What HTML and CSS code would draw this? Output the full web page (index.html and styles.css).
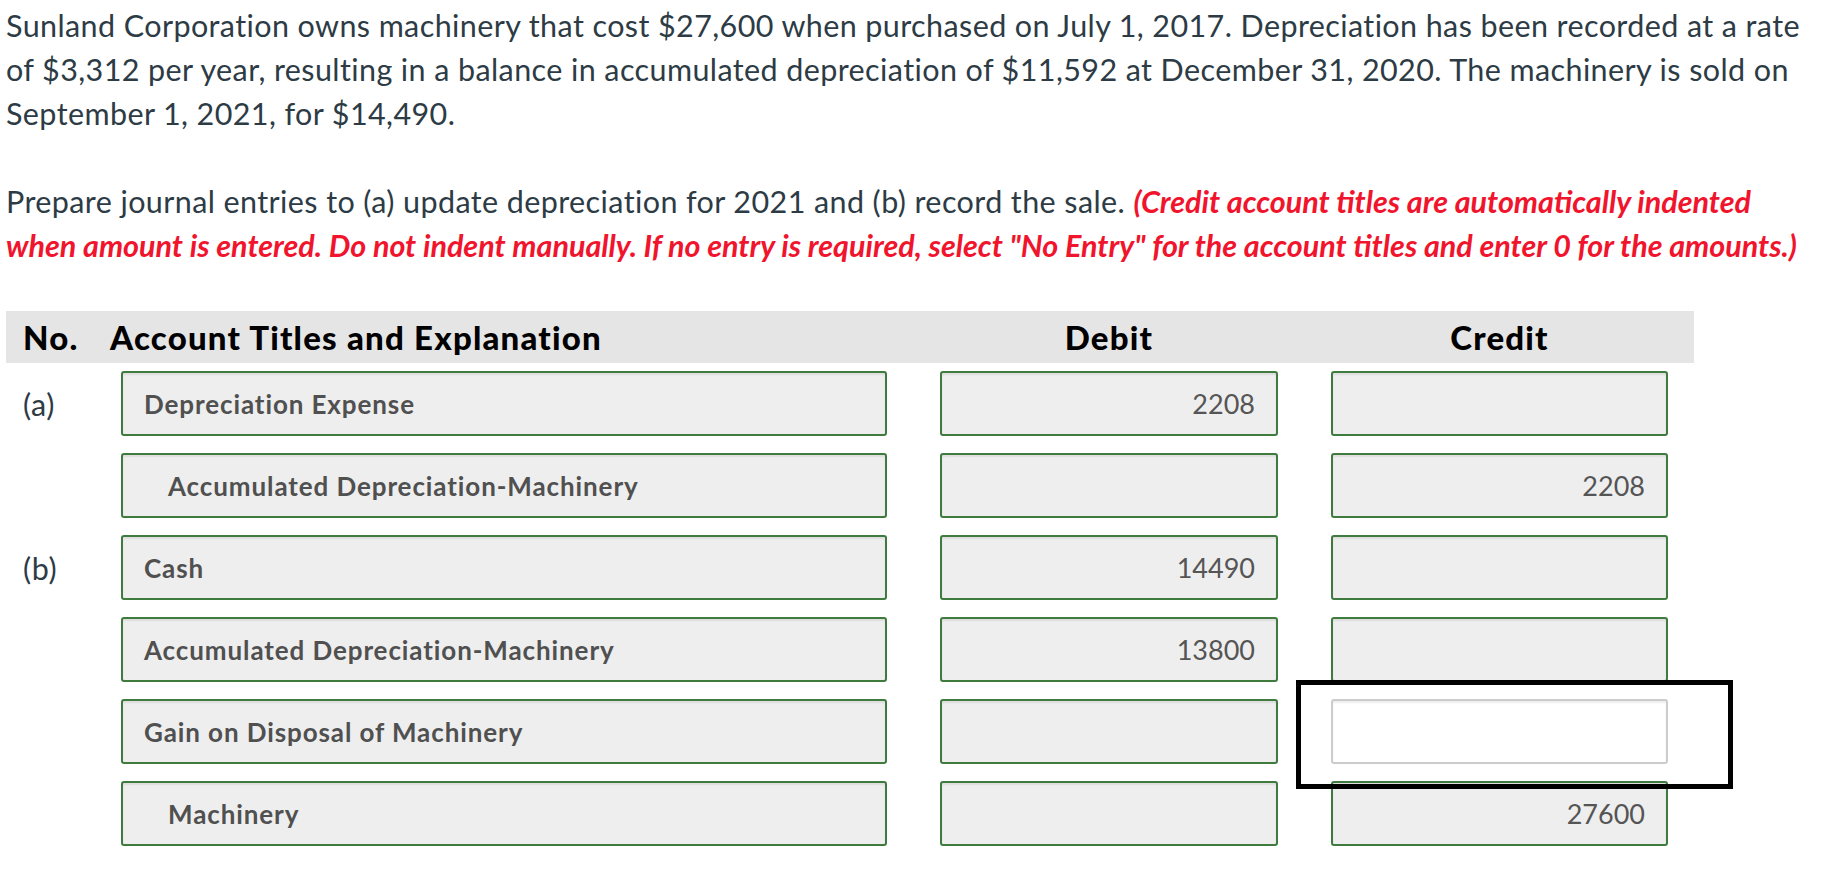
FILE: index.html
```html
<!DOCTYPE html>
<html lang="en">
<head>
    <meta charset="UTF-8">
    <meta name="viewport" content="width=device-width, initial-scale=1.0">
    <title>Journal Entries - Sunland Corporation</title>
    <link rel="stylesheet" href="styles.css">
</head>
<body>
    <div class="question">
        <p>Sunland Corporation owns machinery that cost $27,600 when purchased on July 1, 2017. Depreciation has been recorded at a rate of $3,312 per year, resulting in a balance in accumulated depreciation of $11,592 at December 31, 2020. The machinery is sold on September 1, 2021, for $14,490.</p>
        <p>Prepare journal entries to (a) update depreciation for 2021 and (b) record the sale. <span class="note">(Credit account titles are automatically indented when amount is entered. Do not indent manually. If no entry is required, select "No Entry" for the account titles and enter 0 for the amounts.)</span></p>

        <div class="journal">
            <div class="journal-head">
                <div class="col-no">No.</div>
                <div class="col-title">Account Titles and Explanation</div>
                <div class="col-amt">Debit</div>
                <div class="col-amt">Credit</div>
            </div>

            <div class="journal-row">
                <div class="col-no">(a)</div>
                <div class="field">Depreciation Expense</div>
                <div class="field amount">2208</div>
                <div class="field amount"></div>
            </div>
            <div class="journal-row">
                <div class="col-no"></div>
                <div class="field indent">Accumulated Depreciation-Machinery</div>
                <div class="field amount"></div>
                <div class="field amount">2208</div>
            </div>

            <div class="journal-row">
                <div class="col-no">(b)</div>
                <div class="field">Cash</div>
                <div class="field amount">14490</div>
                <div class="field amount"></div>
            </div>
            <div class="journal-row">
                <div class="col-no"></div>
                <div class="field">Accumulated Depreciation-Machinery</div>
                <div class="field amount">13800</div>
                <div class="field amount"></div>
            </div>
            <div class="journal-row">
                <div class="col-no"></div>
                <div class="field">Gain on Disposal of Machinery</div>
                <div class="field amount"></div>
                <div class="cell-marked">
                    <div class="field amount empty"></div>
                    <div class="marker"></div>
                </div>
            </div>
            <div class="journal-row">
                <div class="col-no"></div>
                <div class="field indent">Machinery</div>
                <div class="field amount"></div>
                <div class="field amount">27600</div>
            </div>
        </div>
    </div>
</body>
</html>
```

FILE: styles.css
```css
body {
    font-family: Lato, 'Open Sans', sans-serif;
    background: #fff;
    color: #2d3b45;
    margin: 0;
    padding: 0;
}
.question {
    padding: 3px 6px 0 6px;
}
.question p {
    font-size: 30.5px;
    letter-spacing: 0.4px;
    line-height: 44px;
    margin: 0 0 44px 0;
    max-width: 1820px;
}
.note {
    color: #f0142c;
    font-weight: 700;
    font-style: italic;
    letter-spacing: 0;
}
.journal {
    position: relative;
}
.journal-head,
.journal-row {
    display: grid;
    grid-template-columns: 62px 766px 338px 337px;
    column-gap: 53px;
    align-items: center;
}
.journal-head {
    width: 1688px;
    height: 52px;
    background: #e5e5e5;
    font-size: 33px;
    letter-spacing: 1.2px;
    font-weight: 900;
    color: #000;
    margin-bottom: 8px;
}
.journal-head .col-title {
    margin-left: -11px;
    white-space: nowrap;
}
.journal-head .col-amt {
    text-align: center;
}
.col-no {
    padding-left: 17px;
    font-size: 30.5px;
    letter-spacing: 0.55px;
}
.journal-head .col-no {
    font-size: 33px;
    letter-spacing: 1.2px;
}
.journal-row {
    margin-bottom: 17px;
}
.field {
    box-sizing: border-box;
    height: 65px;
    border: 2px solid #3f7b3f;
    border-radius: 3px;
    background: #eee;
    box-shadow: inset 0 2px 2px rgba(0, 0, 0, 0.07);
    padding: 0 21px;
    display: flex;
    align-items: center;
    font-size: 26px;
    letter-spacing: 0.9px;
    font-weight: 700;
    color: #505050;
    white-space: nowrap;
}
.field.indent {
    padding-left: 45px;
}
.field.amount {
    justify-content: flex-end;
    font-weight: 400;
    font-size: 27px;
    letter-spacing: 0;
    color: #555;
}
.field.empty {
    background: #fff;
    border-color: #ccc;
}
.cell-marked {
    position: relative;
}
.marker {
    position: absolute;
    left: -35px;
    right: -65px;
    top: -19px;
    bottom: -25px;
    border: 5px solid #000;
    pointer-events: none;
}
```
